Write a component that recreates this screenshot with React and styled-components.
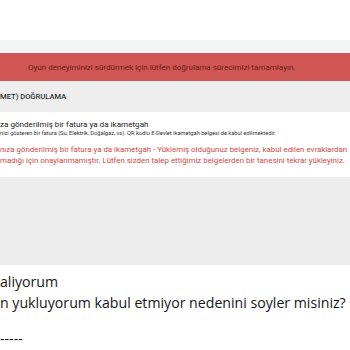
import React from "react";
import styled, { createGlobalStyle } from "styled-components";

const Global = createGlobalStyle`
  html, body { margin: 0; padding: 0; background: #fff; }
  body { width: 350px; height: 350px; overflow: hidden; font-family: Roboto, "Liberation Sans", sans-serif; }
`;

const Page = styled.div`
  display: flex;
  flex-direction: column;
  width: 350px;
  height: 350px;
  overflow: hidden;
`;

const TopSpace = styled.div`
  height: 40px;
  background: #ffffff;
`;

const Band = styled.div`
  height: 13px;
  background: #f4f5f5;
`;

const Alert = styled.div`
  height: 28px;
  background: #cf5653;
  display: flex;
  align-items: center;
  padding-left: 28px;
  font-size: 8.05px;
  color: #6e1c1c;
  white-space: nowrap;
`;

const PanelHeader = styled.div`
  height: 31px;
  background: #eeeeee;
  display: flex;
  align-items: center;
  font-size: 7.6px;
  font-weight: 500;
  color: #333;
  white-space: nowrap;
`;

const PanelBody = styled.div`
  height: 65px;
  background: #fff;
  display: flex;
  flex-direction: column;
  padding-top: 7px;
  box-sizing: border-box;
  white-space: nowrap;
`;

const ItemTitle = styled.div`
  font-size: 8.1px;
  color: #222;
  line-height: 10px;
`;

const ItemNote = styled.div`
  font-size: 5.7px;
  color: #333;
  line-height: 8px;
`;

const ErrorText = styled.div`
  margin-top: 7px;
  font-size: 7.9px;
  line-height: 11px;
  color: #d14848;
`;

const GrayBlock = styled.div`
  height: 88px;
  background: #ededed;
`;

const Message = styled.div`
  flex: 1;
  background: #fff;
  padding-top: 6px;
  font-family: "Open Sans", "Noto Sans", sans-serif;
  font-size: 14.15px;
  line-height: 21px;
  color: #161616;
  white-space: nowrap;
`;

const Line = styled.div`
  margin-top: ${(p) => p.gap || 0}px;
`;

export default function App() {
  return (
    <>
      <Global />
      <Page>
        <TopSpace />
        <Band />
        <Alert>Oyun deneyiminizi sürdürmek için lütfen doğrulama sürecimizi tamamlayın.</Alert>
        <PanelHeader>MET) DOĞRULAMA</PanelHeader>
        <PanelBody>
          <ItemTitle>za gönderilmiş bir fatura ya da ikametgah</ItemTitle>
          <ItemNote>
            nizi gösteren bir fatura (Su, Elektrik, Doğalgaz, vs). QR kodlu E-Devlet ikametgah belgesi de kabul edilmektedir.
          </ItemNote>
          <ErrorText>
            nıza gönderilmiş bir fatura ya da ikametgah - Yüklemiş olduğunuz belgeniz, kabul edilen evraklardan
            <br />
            madığı için onaylanmamıştır. Lütfen sizden talep ettiğimiz belgelerden bir tanesini tekrar yükleyiniz.
          </ErrorText>
        </PanelBody>
        <GrayBlock />
        <Message>
          <Line>aliyorum</Line>
          <Line>n yukluyorum kabul etmiyor nedenini soyler misiniz?</Line>
          <Line gap={15}>-----</Line>
        </Message>
      </Page>
    </>
  );
}
